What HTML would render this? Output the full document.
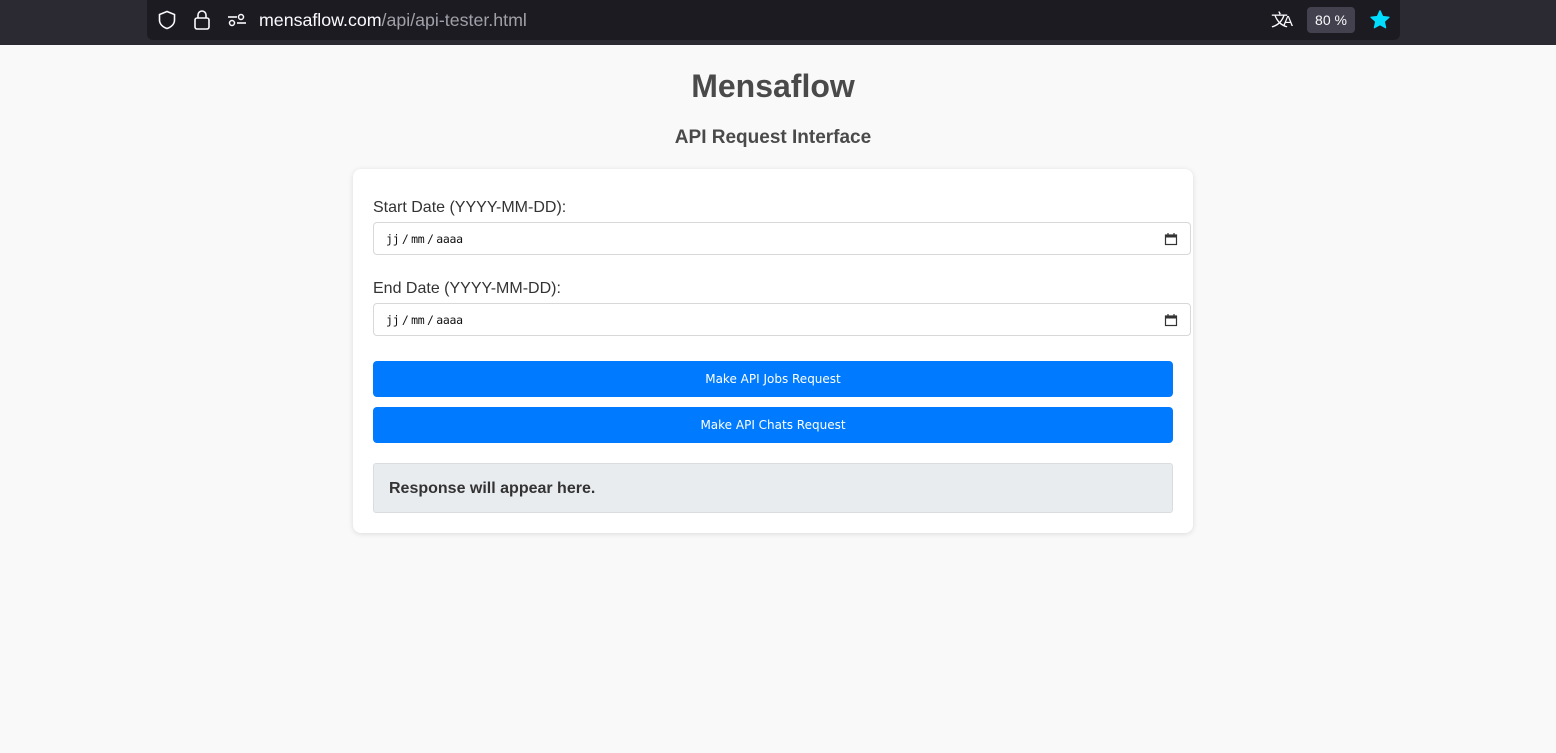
<!DOCTYPE html>
<html><head><meta charset="utf-8"><style>
*{margin:0;padding:0;box-sizing:border-box}
body{width:1556px;height:753px;background:#f9f9f9;font-family:"Liberation Sans",Arial,sans-serif;position:relative;overflow:hidden}
.top{position:absolute;left:0;top:0;width:1556px;height:45px;background:#2b2a33}
.url{position:absolute;left:147px;top:0;width:1253px;height:40px;background:#1c1b22;border-radius:0 0 6px 6px}
.abs{position:absolute}
h1{position:absolute;left:0;width:1546px;text-align:center;top:68px;font-size:32px;color:#4a4a4a;font-weight:bold}
h2{position:absolute;left:0;width:1546px;text-align:center;top:127px;font-size:19px;color:#4a4a4a;font-weight:bold}
.card{position:absolute;left:353px;top:169px;width:840px;height:364px;background:#fff;border-radius:8px;box-shadow:0 1px 6px rgba(0,0,0,.12)}
.lbl{position:absolute;left:373px;font-size:16px;color:#333}
.inp{position:absolute;left:373px;width:818px;height:33px;border:1px solid #d8d8d8;border-radius:4px;background:#fff}
.inp span{position:absolute;left:12px;top:9px;font-family:"DejaVu Sans Mono","Liberation Mono",monospace;font-size:11.5px;color:#111;word-spacing:-4px;letter-spacing:-0.3px}
.inp svg{position:absolute;right:12px;top:9px}
.btn{position:absolute;left:373px;width:800px;height:36px;background:#007bff;border-radius:4px;color:#fff;text-align:center;line-height:36px;font-family:"DejaVu Sans",sans-serif;font-size:12px}
.resp{position:absolute;left:373px;top:463px;width:800px;height:50px;background:#e9ecef;border:1px solid #dadde0;border-radius:3px;font-weight:bold;font-size:16px;color:#333;padding:16px 0 0 15px}
</style></head><body>
<div class="top"></div>
<div class="url"></div>
<svg class="abs" style="left:157px;top:10px" width="20" height="20" viewBox="0 0 20 20"><path d="M10 1.5L2.5 4.5V10c0 4 3.2 7 7.5 8.5 4.3-1.5 7.5-4.5 7.5-8.5V4.5z" fill="none" stroke="#fbfbfe" stroke-width="1.6"/></svg>
<svg class="abs" style="left:192px;top:9px" width="20" height="22" viewBox="0 0 20 22"><rect x="3" y="9" width="14" height="11" rx="2" fill="none" stroke="#fbfbfe" stroke-width="1.6"/><path d="M6 9V6a4 4 0 0 1 8 0v3" fill="none" stroke="#fbfbfe" stroke-width="1.6"/></svg>
<svg class="abs" style="left:227px;top:11px" width="20" height="18" viewBox="0 0 20 18"><line x1="1" y1="6" x2="10" y2="6" stroke="#fbfbfe" stroke-width="1.6"/><circle cx="14" cy="6" r="2.5" fill="none" stroke="#fbfbfe" stroke-width="1.5"/><circle cx="5" cy="12" r="2.5" fill="none" stroke="#fbfbfe" stroke-width="1.5"/><line x1="10" y1="12" x2="19" y2="12" stroke="#fbfbfe" stroke-width="1.6"/></svg>
<div class="abs" style="left:259px;top:10px;font-size:17.8px;color:#fbfbfe">mensaflow.com<span style="color:#a0a0a8">/api/api-tester.html</span></div>
<div class="abs" style="left:1271px;top:8px;font-size:17px;color:#fbfbfe;font-family:'Noto Sans CJK SC',sans-serif;line-height:22px">文<span style="font-family:'Liberation Sans';font-size:15px;margin-left:-5px">A</span></div>
<div class="abs" style="left:1307px;top:7px;width:48px;height:26px;background:#42414d;border-radius:4px;color:#fbfbfe;font-size:14px;text-align:center;line-height:26px">80 %</div>
<svg class="abs" style="left:1369px;top:9px" width="22" height="22" viewBox="0 0 24 24"><path d="M12 2l2.9 6.3 6.9.7-5.2 4.6 1.5 6.8L12 17l-6.1 3.4 1.5-6.8L2.2 9l6.9-.7z" fill="#00ddff" stroke="#00ddff" stroke-width="1.5" stroke-linejoin="round"/></svg>
<h1>Mensaflow</h1>
<h2>API Request Interface</h2>
<div class="card"></div>
<div class="lbl" style="top:199px">Start Date (YYYY-MM-DD):</div>
<div class="inp" style="top:222px"><span>jj / mm / aaaa</span><svg width="14" height="14" viewBox="0 0 14 14"><rect x="1.5" y="3" width="11" height="9.5" fill="none" stroke="#333" stroke-width="1.2"/><rect x="1.5" y="3" width="11" height="2.5" fill="#333"/><line x1="4" y1="1" x2="4" y2="3" stroke="#333" stroke-width="1.2"/><line x1="10" y1="1" x2="10" y2="3" stroke="#333" stroke-width="1.2"/></svg></div>
<div class="lbl" style="top:280px">End Date (YYYY-MM-DD):</div>
<div class="inp" style="top:303px"><span>jj / mm / aaaa</span><svg width="14" height="14" viewBox="0 0 14 14"><rect x="1.5" y="3" width="11" height="9.5" fill="none" stroke="#333" stroke-width="1.2"/><rect x="1.5" y="3" width="11" height="2.5" fill="#333"/><line x1="4" y1="1" x2="4" y2="3" stroke="#333" stroke-width="1.2"/><line x1="10" y1="1" x2="10" y2="3" stroke="#333" stroke-width="1.2"/></svg></div>
<div class="btn" style="top:361px">Make API Jobs Request</div>
<div class="btn" style="top:407px">Make API Chats Request</div>
<div class="resp">Response will appear here.</div>
</body></html>
